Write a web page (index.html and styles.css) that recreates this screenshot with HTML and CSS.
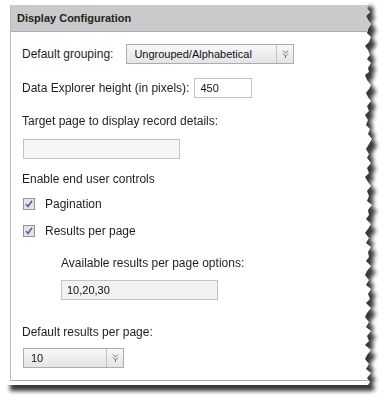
FILE: index.html
```html
<!DOCTYPE html>
<html>
<head>
<meta charset="utf-8">
<link rel="stylesheet" href="styles.css">
</head>
<body>
<div class="sheet-wrap">
  <div class="sheet">
    <div class="panel">
      <div class="panel-head">Display Configuration</div>
      <div class="panel-body">
        <div class="row r1">
          <span class="label">Default grouping:</span>
          <div class="select sel-wide">
            <span class="sel-text">Ungrouped/Alphabetical</span>
            <span class="sel-btn"><svg width="7" height="10" viewBox="0 0 7 10"><path d="M1 1.5 L3.5 4 L6 1.5 M1 4.5 L3.5 7 L6 4.5 M3.5 7 V9" fill="none" stroke="#707070" stroke-width="1"/></svg></span>
          </div>
        </div>
        <div class="row r2">
          <span class="label">Data Explorer height (in pixels):</span>
          <div class="input inp-small">450</div>
        </div>
        <div class="label r3">Target page to display record details:</div>
        <div class="input inp-wide r4"></div>
        <div class="label r5">Enable end user controls</div>
        <div class="row check r6">
          <svg class="cb" width="12" height="12" viewBox="0 0 12 12"><rect x="0.5" y="0.5" width="11" height="11" fill="#e4e4e8" stroke="#9293a8"/><path d="M3 6 L5 8.5 L9 2.8" fill="none" stroke="#55639a" stroke-width="1.6"/></svg>
          <span class="label">Pagination</span>
        </div>
        <div class="row check r7">
          <svg class="cb" width="12" height="12" viewBox="0 0 12 12"><rect x="0.5" y="0.5" width="11" height="11" fill="#e4e4e8" stroke="#9293a8"/><path d="M3 6 L5 8.5 L9 2.8" fill="none" stroke="#55639a" stroke-width="1.6"/></svg>
          <span class="label">Results per page</span>
        </div>
        <div class="nested">
          <div class="label r8">Available results per page options:</div>
          <div class="input inp-wide inp-gray r9">10,20,30</div>
        </div>
        <div class="label r10">Default results per page:</div>
        <div class="select sel-narrow r11">
          <span class="sel-text">10</span>
          <span class="sel-btn"><svg width="7" height="10" viewBox="0 0 7 10"><path d="M1 1.5 L3.5 4 L6 1.5 M1 4.5 L3.5 7 L6 4.5 M3.5 7 V9" fill="none" stroke="#707070" stroke-width="1"/></svg></span>
        </div>
      </div>
    </div>
  </div>
</div>
</body>
</html>
```
FILE: styles.css
```css
html, body {
  margin: 0;
  padding: 0;
  background: #ffffff;
}
body {
  width: 389px;
  height: 402px;
  overflow: hidden;
  font-family: "Liberation Sans", Arial, sans-serif;
  color: #1e1e1e;
}
.sheet-wrap {
  filter: drop-shadow(5px 6px 2px rgba(45, 45, 45, 0.95));
}
.sheet {
  margin-left: 5px;
  width: 368px;
  height: 385px;
  box-sizing: border-box;
  padding: 5px 0 4px 5px;
  background: #ffffff;
  clip-path: polygon(0 0, 362px 0, 364px 4px, 362px 8px, 365px 12px, 361px 16px, 363px 20px, 366px 24px, 363px 29px, 362px 33px, 366px 37px, 364px 42px, 360px 46px, 363px 50px, 365px 55px, 362px 59px, 366px 63px, 363px 68px, 364px 72px, 360px 75px, 362px 80px, 366px 85px, 364px 89px, 361px 93px, 363px 97px, 366px 101px, 362px 106px, 364px 111px, 360px 115px, 363px 120px, 361px 125px, 365px 129px, 363px 134px, 367px 139px, 364px 144px, 361px 149px, 364px 154px, 362px 158px, 366px 163px, 362px 168px, 364px 173px, 360px 177px, 363px 182px, 366px 186px, 362px 191px, 364px 196px, 362px 201px, 367px 205px, 363px 210px, 364px 215px, 361px 219px, 366px 224px, 363px 229px, 360px 233px, 364px 238px, 361px 243px, 366px 247px, 363px 252px, 364px 257px, 361px 261px, 366px 266px, 362px 271px, 360px 275px, 364px 280px, 361px 285px, 366px 289px, 363px 294px, 365px 299px, 361px 303px, 366px 308px, 362px 313px, 360px 317px, 364px 322px, 361px 327px, 366px 331px, 362px 336px, 364px 341px, 360px 345px, 366px 350px, 362px 355px, 360px 359px, 364px 364px, 361px 369px, 366px 373px, 362px 378px, 365px 382px, 363px 385px, 0 385px);
}
.panel {
  height: 376px;
  box-sizing: border-box;
  border-left: 1px solid #b9b9c9;
  border-bottom: 1px solid #a9a9c0;
}
.panel-head {
  height: 27px;
  box-sizing: border-box;
  background: #cacaca;
  border-bottom: 1px solid #a9a9c0;
  font-size: 11px;
  font-weight: bold;
  line-height: 26px;
  padding-left: 6px;
  color: #222222;
}
.panel-body {
  display: flex;
  flex-direction: column;
  align-items: flex-start;
  padding-left: 11px;
}
.label {
  font-size: 12px;
  line-height: 14px;
}
.row {
  display: flex;
  align-items: center;
}
.r1 { margin-top: 12px; gap: 13px; }
.r2 { margin-top: 14px; gap: 5px; }
.r3 { margin-top: 16px; }
.r4 { margin-top: 11px; margin-left: 1px; }
.r5 { margin-top: 13px; }
.r6 { margin-top: 11px; }
.r7 { margin-top: 13px; }
.r8 { margin-top: 18px; }
.r9 { margin-top: 10px; }
.r10 { margin-top: 25px; }
.r11 { margin-top: 9px; margin-left: 1px; }
.check { gap: 10px; }
.cb { margin-left: 1px; display: block; }
.nested {
  margin-left: 39px;
  display: flex;
  flex-direction: column;
  align-items: flex-start;
}
.input {
  height: 20px;
  box-sizing: border-box;
  border: 1px solid #c3c3cf;
  background: #f6f6f8;
  font-size: 11px;
  line-height: 18px;
  padding-left: 5px;
  color: #111111;
}
.inp-small {
  width: 58px;
  background: #ffffff;
}
.inp-wide {
  width: 157px;
}
.inp-gray {
  background: #f2f2f2;
}
.select {
  height: 20px;
  box-sizing: border-box;
  border: 1px solid #aaaabe;
  background: linear-gradient(#f8f8f8, #e4e4e4);
  display: flex;
  align-items: stretch;
  font-size: 11px;
  color: #111111;
}
.sel-text {
  flex: 1;
  line-height: 18px;
  padding-left: 7px;
}
.sel-wide { width: 168px; }
.sel-narrow { width: 101px; }
.sel-btn {
  width: 16px;
  border-left: 1px solid #c0c0cc;
  display: flex;
  align-items: center;
  justify-content: center;
}
.sel-btn svg { display: block; }
```
